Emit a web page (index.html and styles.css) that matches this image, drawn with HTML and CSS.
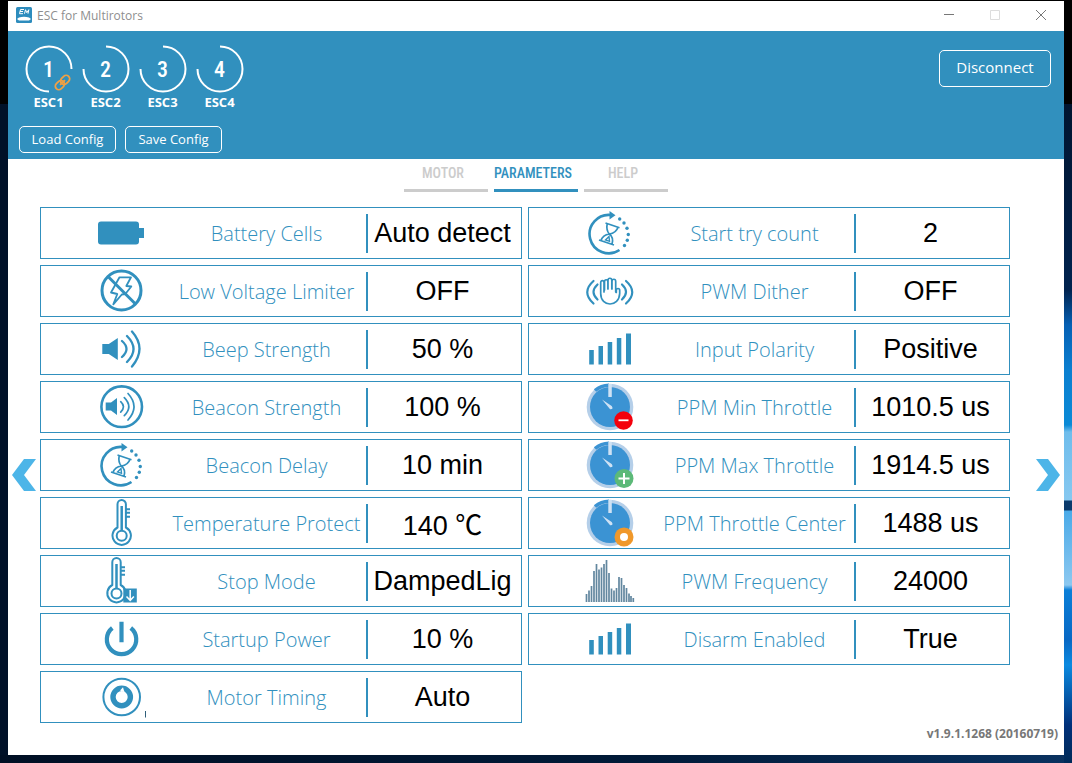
FILE: index.html
```html
<!DOCTYPE html>
<html lang="en">
<head>
<meta charset="utf-8">
<title>ESC for Multirotors</title>
<link rel="stylesheet" href="styles.css">
</head>
<body>
<svg class="defs" aria-hidden="true">
  <symbol id="battery" viewBox="0 0 50 50"><path fill="currentColor" d="M4 13.500h35q3 0 3 3v3.500h5v10h-5v3.500q0 3-3 3H4q-3 0-3-3v-17q0-3 3-3z"/></symbol>
  <symbol id="novolt" viewBox="0 0 50 50"><g fill="none" stroke="currentColor"><circle cx="24.500" cy="24.500" r="19.500" stroke-width="3"/><path stroke-width="3" d="M11 10.500l27.500 27.500"/><path stroke-width="1.800" stroke-linejoin="round" d="M22.500 11.300H34L29.300 20l5 .5-6 7.500-3.500.5L16.300 38.300 20.300 28 14 26.500z"/></g></symbol>
  <symbol id="speaker" viewBox="0 0 50 50"><path fill="currentColor" d="M5.300 20h6.500l9-6v22l-9-6H5.300z"/><g fill="none" stroke="currentColor" stroke-width="2.300" stroke-linecap="round"><path d="M25 17q9 8 0 16M30 12q13 13 0 26M35 7.500q15 17 0 35"/></g></symbol>
  <symbol id="beacon" viewBox="0 0 50 50"><path fill="currentColor" d="M8.700 20.500H14l6-4.500v17l-6-4.500H8.700z"/><g fill="none" stroke="currentColor" stroke-width="1.700" stroke-linecap="round"><circle cx="24.700" cy="24.700" r="20.300" stroke-width="2.600"/><path d="M23.700 19.700q5.500 5 0 10.500M27.300 15.700q9 9 0 18M31 11.500q12 13 0 26.500"/></g></symbol>
  <symbol id="delay" viewBox="0 0 50 50"><g fill="none" stroke="currentColor"><path stroke-width="2.600" d="M26 7A19.200 19.200 0 1 0 34.500 42"/><path stroke-width="1.700" stroke-linejoin="round" d="M20.500 15l14 4.700M14 32l15 5M22.200 15.500c-1 5.500.2 8.500 2.200 10.500-3.500.5-7 2-8.400 6.500M33 19.300c-1.500 4.500-5 6.200-8.600 6.700 2.600 2 4 5.500 2.600 10.300"/><path stroke-width="1.400" d="M24 28.500l-3.500 3.500 4 1.300z"/></g><g fill="currentColor"><path d="M24.500 3v8.600l6-4.300z"/><circle cx="34.700" cy="11" r="1.700"/><circle cx="39" cy="15" r="1.700"/><circle cx="42" cy="20.300" r="1.700"/><circle cx="43.300" cy="26.500" r="1.700"/><circle cx="42.300" cy="32.300" r="1.700"/><circle cx="39.500" cy="37.500" r="1.700"/></g></symbol>
  <symbol id="thermo" viewBox="0 0 50 50"><g fill="none" stroke="currentColor" stroke-width="2"><path d="M20.500 29.500V6.200a4.200 4.200 0 0 1 8.400 0v23.300a9.200 9.200 0 1 1-8.400 0zM29 11.300h4M29 14.700h4M29 18.700h4"/><circle cx="24.700" cy="37.800" r="5"/><path stroke-width="2.500" d="M24.700 8v25"/></g></symbol>
  <symbol id="stop" viewBox="0 0 50 50"><g fill="none" stroke="currentColor" stroke-width="2"><path d="M15.300 29V6.200a4.200 4.200 0 0 1 8.400 0V29a9.200 9.200 0 1 1-8.400 0zM24 11.300h4M24 14.700h4M24 18.700h4"/><circle cx="19.500" cy="37.500" r="5"/><path stroke-width="2.500" d="M19.500 8v25"/></g><path fill="currentColor" d="M26.300 32.500h13.500v14H26.300z"/><path fill="none" stroke="#fff" stroke-width="1.500" d="M33.200 34v10M29.500 40.500l3.700 3.800 3.700-3.800"/></symbol>
  <symbol id="power" viewBox="0 0 50 50"><g fill="none" stroke="currentColor" stroke-width="4.200"><path d="M15.300 14a14.700 14.700 0 1 0 18.500 0M24.500 7.700v20.500"/></g></symbol>
  <symbol id="timing" viewBox="0 0 50 50"><g fill="none" stroke="currentColor"><circle cx="24.700" cy="25" r="18.300" stroke-width="2"/><circle cx="24.700" cy="25" r="8.700" stroke-width="5.400"/><path d="M48.500 39v6.500" stroke="#2f5f7a"/></g><path fill="#fff" d="M23 18.500l3-3.300.8 2.800 1 2.500z"/></symbol>
  <symbol id="hand" viewBox="0 0 50 50"><g fill="none" stroke="currentColor" stroke-width="2.200" stroke-linecap="round"><path d="M8.500 15q-12.500 11 0 22.500M12.500 18.500q-8 7.500 0 15M41 15q12.500 11 0 22.500M37 18.500q8 7.500 0 15"/><path stroke-width="1.700" d="M19 26v-9.500c0-2.500-3.300-2.500-3.300 0v11c0 14 18.500 14 19 0v-3c0-2.700-3.400-2.700-3.400 0v2M19.500 24v-8c0-3 3.400-3 3.400 0v7M23 23v-8.500c0-3 3.800-3 3.800 0V23M27 23v-7.500c0-3 3.700-3 3.700 0V26"/></g></symbol>
  <symbol id="bars" viewBox="0 0 50 50"><path fill="currentColor" d="M4.200 26h4.600v14.500h-4.600zM13.500 22h4.500v18.500h-4.500zM22.700 18h4.500v22.500h-4.500zM31.800 14h4.500v26.500h-4.500zM41 9.500h5v31h-5z"/></symbol>
  <symbol id="gauge" viewBox="0 0 50 50"><circle cx="25" cy="25" r="23.300" fill="#b5cfe9"/><circle cx="25" cy="25" r="20" fill="#3b93d3"/><path fill="none" stroke="#3b93d3" stroke-width="3.600" d="M10 8.500A22 22 0 0 1 24 3.200"/><path fill="#cfe2f4" d="M23.300 2h3.500v13h-3.500zM17 17.500l9.700 6.500q2.300 3.500-1.600 3.300z"/></symbol>
  <symbol id="pmin" viewBox="0 0 50 50"><use href="#gauge"/><circle cx="38.500" cy="38.500" r="9.300" fill="#f4000c"/><path stroke="#fff" stroke-width="1.800" d="M33.500 38.300h10"/></symbol>
  <symbol id="pmax" viewBox="0 0 50 50"><use href="#gauge"/><circle cx="39" cy="38.500" r="9.500" fill="#5cb978"/><path stroke="#fff" stroke-width="2" d="M33.500 38.500h11M39 33v11"/></symbol>
  <symbol id="pmid" viewBox="0 0 50 50"><use href="#gauge"/><circle cx="39" cy="39" r="9.500" fill="#f0982a"/><circle cx="39" cy="39" r="4" fill="#fff"/></symbol>
  <symbol id="freq" viewBox="0 0 50 50"><path fill="none" stroke="#62879f" stroke-width="1.700" d="M1.500 46v-8M4 46V34.500M6.500 46V30M9 46V15M11.500 46V8M14 46V13.500M16.500 46v-34.500M19 46V8M21.500 46V4M24 46V17M26.500 46V32.500M29 46V34.500M31.500 46V32M34 46V21M36.500 46V22M39 46V29M41.500 46V32M44 46v-8.500M46 46v-6M48.300 46v-4"/></symbol>
  <symbol id="ring" viewBox="0 0 50 50"><path fill="none" stroke="#fff" stroke-width="2" d="M25 2.500A22.500 22.500 0 1 1 2.500 25"/></symbol>
  <symbol id="ring-linked" viewBox="0 0 50 50"><path fill="none" stroke="#fff" stroke-width="2" d="M25 47.500A22.500 22.500 0 1 1 47.500 25"/><g transform="rotate(-45 38.500 38.500)" fill="none" stroke="#f0a044" stroke-width="1.800"><rect x="29.800" y="35" width="10" height="7" rx="3.500"/><rect x="37.200" y="35" width="10" height="7" rx="3.500"/><path d="M35 38.500h7"/></g></symbol>
</svg>

<div class="window">
  <div class="titlebar">
    <svg class="logo" viewBox="0 0 16 16" aria-hidden="true"><rect width="16" height="16" rx="1.500" fill="#2d8cbd"/><path d="M4.500 2.500H8M4 4.500h3M3.500 6.700H7M4.500 2.500l-1 4.200M8.500 6.700l1-4 1.300 3 2-3-.8 4" fill="none" stroke="#fff"/><path fill="#fff" d="M3 10.500q5-1.500 10 0l2 1.500-2 1.500H3L1 12z"/></svg>
    <h1 class="app-name">ESC for Multirotors</h1>
    <button class="win-btn" aria-label="Minimize"><svg viewBox="0 0 12 12"><path d="M1 5.500h10"/></svg></button>
    <button class="win-btn win-btn-off" aria-label="Maximize" disabled><svg viewBox="0 0 12 12"><path d="M1.500 1.500h9v9h-9z"/></svg></button>
    <button class="win-btn" aria-label="Close"><svg viewBox="0 0 12 12"><path d="M1 1l10 10M11 1L1 11"/></svg></button>
  </div>

  <header class="header">
    <div class="header-left">
      <div class="escs">
        <button class="esc"><span class="dial"><svg><use href="#ring-linked"/></svg><span class="num">1</span></span>ESC1</button>
        <button class="esc"><span class="dial"><svg><use href="#ring"/></svg><span class="num">2</span></span>ESC2</button>
        <button class="esc"><span class="dial"><svg><use href="#ring"/></svg><span class="num">3</span></span>ESC3</button>
        <button class="esc"><span class="dial"><svg><use href="#ring"/></svg><span class="num">4</span></span>ESC4</button>
      </div>
      <div class="actions">
        <button class="outline">Load Config</button>
        <button class="outline">Save Config</button>
      </div>
    </div>
    <button class="outline outline-large">Disconnect</button>
  </header>

  <nav class="tabs">
    <a class="tab" href="#motor">MOTOR</a>
    <a class="tab tab-active" href="#parameters" aria-current="page">PARAMETERS</a>
    <a class="tab" href="#help">HELP</a>
  </nav>

  <main class="main">
    <button class="arrow arrow-prev" aria-label="Previous"><svg viewBox="0 0 24 32"><path d="M24 0H12L0 16l12 16h12L12 16z"/></svg></button>
    <div class="params">
      <div class="param"><svg class="icon"><use href="#battery"/></svg><label class="name" for="p1">Battery Cells</label><input class="value" id="p1" value="Auto detect"></div>
      <div class="param"><svg class="icon"><use href="#novolt"/></svg><label class="name" for="p2">Low Voltage Limiter</label><input class="value" id="p2" value="OFF"></div>
      <div class="param"><svg class="icon"><use href="#speaker"/></svg><label class="name" for="p3">Beep Strength</label><input class="value" id="p3" value="50 %"></div>
      <div class="param"><svg class="icon"><use href="#beacon"/></svg><label class="name" for="p4">Beacon Strength</label><input class="value" id="p4" value="100 %"></div>
      <div class="param"><svg class="icon"><use href="#delay"/></svg><label class="name" for="p5">Beacon Delay</label><input class="value" id="p5" value="10 min"></div>
      <div class="param"><svg class="icon"><use href="#thermo"/></svg><label class="name" for="p6">Temperature Protect</label><input class="value" id="p6" value="140 ℃"></div>
      <div class="param"><svg class="icon"><use href="#stop"/></svg><label class="name" for="p7">Stop Mode</label><input class="value" id="p7" value="DampedLig"></div>
      <div class="param"><svg class="icon"><use href="#power"/></svg><label class="name" for="p8">Startup Power</label><input class="value" id="p8" value="10 %"></div>
      <div class="param"><svg class="icon"><use href="#timing"/></svg><label class="name" for="p9">Motor Timing</label><input class="value" id="p9" value="Auto"></div>
      <div class="param"><svg class="icon"><use href="#delay"/></svg><label class="name" for="p10">Start try count</label><input class="value" id="p10" value="2"></div>
      <div class="param"><svg class="icon"><use href="#hand"/></svg><label class="name" for="p11">PWM Dither</label><input class="value" id="p11" value="OFF"></div>
      <div class="param"><svg class="icon"><use href="#bars"/></svg><label class="name" for="p12">Input Polarity</label><input class="value" id="p12" value="Positive"></div>
      <div class="param"><svg class="icon"><use href="#pmin"/></svg><label class="name" for="p13">PPM Min Throttle</label><input class="value" id="p13" value="1010.5 us"></div>
      <div class="param"><svg class="icon"><use href="#pmax"/></svg><label class="name" for="p14">PPM Max Throttle</label><input class="value" id="p14" value="1914.5 us"></div>
      <div class="param"><svg class="icon"><use href="#pmid"/></svg><label class="name" for="p15">PPM Throttle Center</label><input class="value" id="p15" value="1488 us"></div>
      <div class="param"><svg class="icon"><use href="#freq"/></svg><label class="name" for="p16">PWM Frequency</label><input class="value" id="p16" value="24000"></div>
      <div class="param"><svg class="icon"><use href="#bars"/></svg><label class="name" for="p17">Disarm Enabled</label><input class="value" id="p17" value="True"></div>
    </div>
    <button class="arrow arrow-next" aria-label="Next"><svg viewBox="0 0 24 32"><path d="M0 0h12l12 16-12 16H0l12-16z"/></svg></button>
    <footer class="version">v1.9.1.1268 (20160719)</footer>
  </main>
</div>
</body>
</html>
```
FILE: styles.css
```css
* { box-sizing: border-box; }

body {
  margin: 0;
  min-height: 100vh;
  display: flex;
  padding: 1px 8px 8px;
  font-family: "Open Sans", "Noto Sans", sans-serif;
  background:
    linear-gradient(to bottom, #000 0, #000 104px, #001530 104px, #00234f 290px, #0560b4 325px, #0b7fd0 370px, #0a8ad6 425px, #6fbdec 432px, #86c8f0 500px, #0a3a6c 501px, #0a3a6c 510px, #4aaae8 511px, #8cc8f0 585px, #0a7fd8 590px, #0868c4 640px, #0b8ae0 665px, #00307a 725px, #002b58 763px) right / 8px 100% no-repeat,
    linear-gradient(to right, #000f24, #001a38 60%, #0a3260) bottom / 100% 8px no-repeat,
    linear-gradient(to bottom, #000 0, #000 104px, #001128 104px, #001128 100%);
}

button {
  margin: 0;
  padding: 0;
  border: 0;
  background: none;
  color: inherit;
  font-family: inherit;
}

.defs { position: absolute; width: 0; height: 0; }

.window {
  flex: 1;
  display: flex;
  flex-direction: column;
  background: #fff;
}

.titlebar {
  display: flex;
  align-items: center;
  height: 30px;
  padding: 0 0 2px 8px;
}
.logo { width: 16px; height: 16px; margin-right: 5px; }
.app-name { flex: 1; margin: 0; font-size: 12px; font-weight: 400; color: #8e8e8e; }
.win-btn { width: 46px; height: 28px; display: grid; place-items: center; }
.win-btn svg { width: 12px; height: 12px; fill: none; stroke: #777; }
.win-btn-off svg { stroke: #ddd; }

.header {
  display: flex;
  justify-content: space-between;
  align-items: flex-start;
  height: 128px;
  padding: 13px 13px 6px 11px;
  background: #3190be;
  color: #fff;
}
.header-left { display: flex; flex-direction: column; gap: 15px; }
.escs { display: flex; padding-left: 1px; }
.esc {
  display: flex;
  flex-direction: column;
  align-items: center;
  width: 57px;
  font-size: 13px;
  font-weight: 700;
  line-height: 17px;
}
.dial { display: grid; place-items: center; }
.dial > * { grid-area: 1 / 1; }
.dial svg { width: 50px; height: 50px; }
.num { font-family: "Roboto Condensed", "Liberation Sans Narrow", "Roboto", sans-serif; font-size: 22px; font-weight: 500; }
.actions { display: flex; gap: 9px; }
.outline {
  width: 97px;
  height: 27px;
  padding-bottom: 2px;
  border: 1px solid #fff;
  border-radius: 5px;
  font-size: 13px;
}
.outline-large { width: 112px; height: 37px; margin-top: 6px; padding-bottom: 4px; font-size: 15px; }

.tabs { display: flex; justify-content: center; gap: 6px; height: 33px; }
.tab {
  width: 84px;
  padding-right: 6px;
  border-bottom: 3px solid #ccc;
  color: #ccc;
  font-family: "Roboto Condensed", "Liberation Sans Narrow", "Roboto", sans-serif;
  font-size: 14px;
  font-weight: 500;
  line-height: 28px;
  text-align: center;
  text-decoration: none;
}
.tab-active { color: #3190be; border-color: #3190be; }

.main {
  flex: 1;
  display: grid;
  grid-template-columns: 32px 1fr 54px;
  grid-template-rows: 1fr auto;
}
.params {
  grid-area: 1 / 2;
  display: grid;
  grid-auto-flow: column;
  grid-template-rows: repeat(9, 52px);
  grid-auto-columns: 1fr;
  gap: 6px;
  padding-top: 15px;
}
.arrow { display: flex; align-items: center; padding-top: 2px; fill: #4db5e8; }
.arrow svg { width: 24px; height: 32px; }
.arrow-prev { grid-area: 1 / 1 / 3 / 2; padding-left: 4px; }
.arrow-next { grid-area: 1 / 3 / 3 / 4; justify-content: flex-end; padding-right: 4px; }
.version {
  grid-area: 2 / 1 / 3 / 4;
  height: 32px;
  padding-right: 6px;
  color: #777;
  font-size: 12px;
  font-weight: 700;
  line-height: 22px;
  text-align: right;
}

.param {
  display: grid;
  grid-template-columns: 90px 1fr 155px;
  align-items: center;
  padding-left: 36px;
  border: 1px solid #3190be;
  color: #3190be;
}
.icon { width: 50px; height: 50px; justify-self: center; }
.name { font-size: 20px; font-weight: 300; text-align: center; white-space: nowrap; }
.value {
  width: 100%;
  height: 39px;
  padding: 0 4px 0 0;
  border: 0;
  border-left: 2px solid #3190be;
  background: none;
  color: #000;
  font-family: "Liberation Sans", "Noto Sans CJK SC", sans-serif;
  font-size: 27px;
  text-align: center;
}
```
